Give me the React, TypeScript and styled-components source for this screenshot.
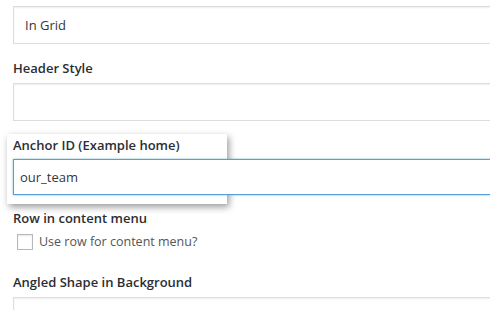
import { FC } from 'react'
import styled, { createGlobalStyle } from 'styled-components'

const GlobalStyle = createGlobalStyle`
  html, body {
    margin: 0;
    padding: 0;
    background: #fff;
    overflow: hidden;
  }
  body {
    font-family: 'Open Sans', 'Noto Sans', sans-serif;
    font-size: 13px;
    line-height: 19px;
    color: #444;
  }
`

const Page = styled.div`
  width: 490px;
  height: 310px;
  overflow: hidden;
  padding: 6px 0 0 13px;
  box-sizing: border-box;
`

const FieldInput = styled.div<{ $focused?: boolean; $gapTop?: number }>`
  box-sizing: border-box;
  width: 700px;
  height: ${(p) => (p.$focused ? 36 : 38)}px;
  margin-top: ${(p) => p.$gapTop ?? 0}px;
  padding: 0 ${(p) => (p.$focused ? 6 : 11)}px;
  display: flex;
  align-items: center;
  background: #fff;
  border: 1px solid ${(p) => (p.$focused ? '#5b9dd9' : '#ddd')};
  box-shadow: ${(p) =>
    p.$focused
      ? '0 0 2px rgba(30, 140, 190, 0.6)'
      : 'inset 0 1px 2px rgba(0, 0, 0, 0.07)'};
  color: #32373c;
  position: relative;
  z-index: 1;
`

const Label = styled.div<{ $gapTop?: number }>`
  margin-top: ${(p) => p.$gapTop ?? 0}px;
  font-weight: 600;
  color: #2a2e33;
`

const FocusCard = styled.div`
  width: 220px;
  box-sizing: border-box;
  margin: 13px 0 0 -6px;
  padding: 2px 0 9px 6px;
  background: #fff;
  box-shadow: 2px 3px 7px rgba(0, 0, 0, 0.4);
`

const CheckRow = styled.label`
  display: flex;
  align-items: center;
  gap: 6px;
  margin: 4px 0 0 4px;
  font-size: 12.5px;
  color: #555;
`

const Box = styled.span`
  width: 16px;
  height: 16px;
  box-sizing: border-box;
  border: 1px solid #b4b9be;
  background: #fff;
  box-shadow: inset 0 1px 2px rgba(0, 0, 0, 0.1);
`

const Field: FC<{ label: string; value?: string; gapTop: number }> = ({ label, value, gapTop }) => (
  <>
    <Label $gapTop={gapTop}>{label}</Label>
    <FieldInput $gapTop={5}>{value}</FieldInput>
  </>
)

export default function App() {
  return (
    <Page>
      <GlobalStyle />
      <FieldInput>In Grid</FieldInput>
      <Field label="Header Style" gapTop={15} />
      <FocusCard>
        <Label>Anchor ID (Example home)</Label>
        <FieldInput $focused $gapTop={4}>
          our_team
        </FieldInput>
      </FocusCard>
      <Label $gapTop={5}>Row in content menu</Label>
      <CheckRow>
        <Box />
        <span>Use row for content menu?</span>
      </CheckRow>
      <Field label="Angled Shape in Background" gapTop={22} />
    </Page>
  )
}
